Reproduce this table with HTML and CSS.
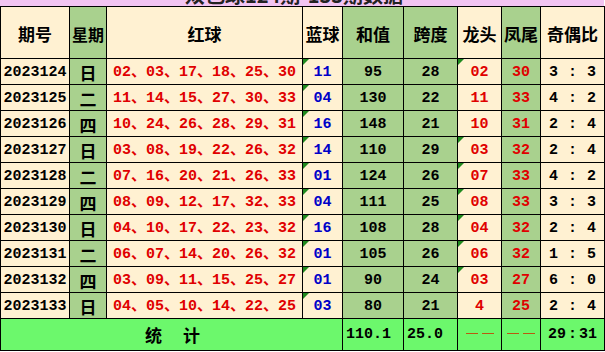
FILE: index.html
```html
<!DOCTYPE html>
<html lang="zh">
<head>
<meta charset="utf-8">
<link rel="stylesheet" href="styles.css">
</head>
<body>
<div class="title"><div class="title-text">双色球124期-133期数据</div></div>
<table class="grid">
<colgroup>
<col style="width:69px"><col style="width:37px"><col style="width:196px"><col style="width:40px"><col style="width:61px"><col style="width:54px"><col style="width:44px"><col style="width:39px"><col style="width:64px">
</colgroup>
<thead>
<tr class="head">
<th class="cream">期号</th><th class="green small">星期</th><th class="cream">红球</th><th class="cream">蓝球</th><th class="green">和值</th><th class="green">跨度</th><th class="cream">龙头</th><th class="green">凤尾</th><th class="cream">奇偶比</th>
</tr>
</thead>
<tbody>
<tr class="row"><td class="cream num">2023124</td><td class="green cjk">日</td><td class="cream red">02、03、17、18、25、30</td><td class="cream blue tri">11</td><td class="green num">95</td><td class="green num">28</td><td class="cream red tri">02</td><td class="green red">30</td><td class="cream num">3<span class="colon">:</span>3</td></tr>
<tr class="row"><td class="cream num">2023125</td><td class="green cjk">二</td><td class="cream red">11、14、15、27、30、33</td><td class="cream blue tri">04</td><td class="green num">130</td><td class="green num">22</td><td class="cream red">11</td><td class="green red">33</td><td class="cream num">4<span class="colon">:</span>2</td></tr>
<tr class="row"><td class="cream num">2023126</td><td class="green cjk">四</td><td class="cream red">10、24、26、28、29、31</td><td class="cream blue tri">16</td><td class="green num">148</td><td class="green num">21</td><td class="cream red">10</td><td class="green red">31</td><td class="cream num">2<span class="colon">:</span>4</td></tr>
<tr class="row"><td class="cream num">2023127</td><td class="green cjk">日</td><td class="cream red">03、08、19、22、26、32</td><td class="cream blue tri">14</td><td class="green num">110</td><td class="green num">29</td><td class="cream red tri">03</td><td class="green red">32</td><td class="cream num">2<span class="colon">:</span>4</td></tr>
<tr class="row"><td class="cream num">2023128</td><td class="green cjk">二</td><td class="cream red">07、16、20、21、26、33</td><td class="cream blue tri">01</td><td class="green num">124</td><td class="green num">26</td><td class="cream red tri">07</td><td class="green red">33</td><td class="cream num">4<span class="colon">:</span>2</td></tr>
<tr class="row"><td class="cream num">2023129</td><td class="green cjk">四</td><td class="cream red">08、09、12、17、32、33</td><td class="cream blue tri">04</td><td class="green num">111</td><td class="green num">25</td><td class="cream red tri">08</td><td class="green red">33</td><td class="cream num">3<span class="colon">:</span>3</td></tr>
<tr class="row"><td class="cream num">2023130</td><td class="green cjk">日</td><td class="cream red">04、10、17、22、23、32</td><td class="cream blue tri">16</td><td class="green num">108</td><td class="green num">28</td><td class="cream red tri">04</td><td class="green red">32</td><td class="cream num">2<span class="colon">:</span>4</td></tr>
<tr class="row"><td class="cream num">2023131</td><td class="green cjk">二</td><td class="cream red">06、07、14、20、26、32</td><td class="cream blue tri">01</td><td class="green num">105</td><td class="green num">26</td><td class="cream red tri">06</td><td class="green red">32</td><td class="cream num">1<span class="colon">:</span>5</td></tr>
<tr class="row"><td class="cream num">2023132</td><td class="green cjk">四</td><td class="cream red">03、09、11、15、25、27</td><td class="cream blue tri">01</td><td class="green num">90</td><td class="green num">24</td><td class="cream red tri">03</td><td class="green red">27</td><td class="cream num">6<span class="colon">:</span>0</td></tr>
<tr class="row"><td class="cream num">2023133</td><td class="green cjk">日</td><td class="cream red">04、05、10、14、22、25</td><td class="cream blue tri">03</td><td class="green num">80</td><td class="green num">21</td><td class="cream red">4</td><td class="green red">25</td><td class="cream num">2<span class="colon">:</span>4</td></tr>
</tbody>
<tfoot>
<tr class="total">
<td colspan="4" class="label">统　计</td><td class="num left">110.1</td><td class="num left">25.0</td><td class="dash"><span class="bar"></span><span class="bar"></span></td><td class="dash"><span class="bar"></span><span class="bar"></span></td><td class="num">29<span class="colon tight">:</span>31</td>
</tr>
</tfoot>
</table>
</body>
</html>
```
FILE: styles.css
```css
html, body {
  margin: 0;
  padding: 0;
  background: #ffffff;
}

.title {
  width: 604px;
  height: 6px;
  overflow: hidden;
  background: #f2c4f2;
}

.title-text {
  margin-top: -16px;
  height: 22px;
  line-height: 22px;
  text-align: center;
  padding-right: 16px;
  font-family: "Noto Sans CJK SC", sans-serif;
  font-weight: 700;
  font-size: 20px;
  color: #222;
}

.grid {
  width: 604px;
  table-layout: fixed;
  border-collapse: collapse;
  font-family: "Liberation Mono", "Noto Sans CJK SC", monospace;
  font-weight: 700;
  font-size: 15px;
  line-height: 18px;
}

.grid th,
.grid td {
  border: 1px solid #000;
  padding: 0;
  text-align: center;
  white-space: nowrap;
  overflow: hidden;
}

.grid td {
  position: relative;
  padding-top: 3px;
}

.head { height: 52px; }
.row { height: 26px; }
.total { height: 32px; }

.head th {
  font-family: "Noto Sans CJK SC", sans-serif;
  font-weight: 700;
  font-size: 17px;
  color: #000;
  padding-top: 2px;
}

.head th.small {
  font-size: 16px;
}

.cream { background: #fff1d2; }
.green { background: #a9d18e; }

.num { color: #000; }
.red { color: #e00000; }
.blue { color: #0000c8; }

.colon {
  margin: 0 10px;
}

.colon.tight {
  margin: 0 2px;
}

.cjk {
  font-family: "Noto Sans CJK SC", sans-serif;
  font-size: 17px;
  font-weight: 700;
  color: #000;
}

.tri::before {
  content: "";
  position: absolute;
  left: 0;
  top: 0;
  border-top: 6px solid #1f8a1f;
  border-right: 6px solid transparent;
}

.total td {
  background: #6cf86c;
  padding-top: 1px;
}

.total .label {
  font-family: "Noto Sans CJK SC", sans-serif;
  font-size: 17px;
  font-weight: 700;
  letter-spacing: 2px;
  padding-left: 4px;
}

.total .left {
  text-align: left;
  padding-left: 3px;
}

.total td.dash {
  padding-top: 0;
}

.bar {
  display: inline-block;
  width: 12px;
  height: 1px;
  margin: 0 2px;
  vertical-align: middle;
  background: #b85a10;
}
```
